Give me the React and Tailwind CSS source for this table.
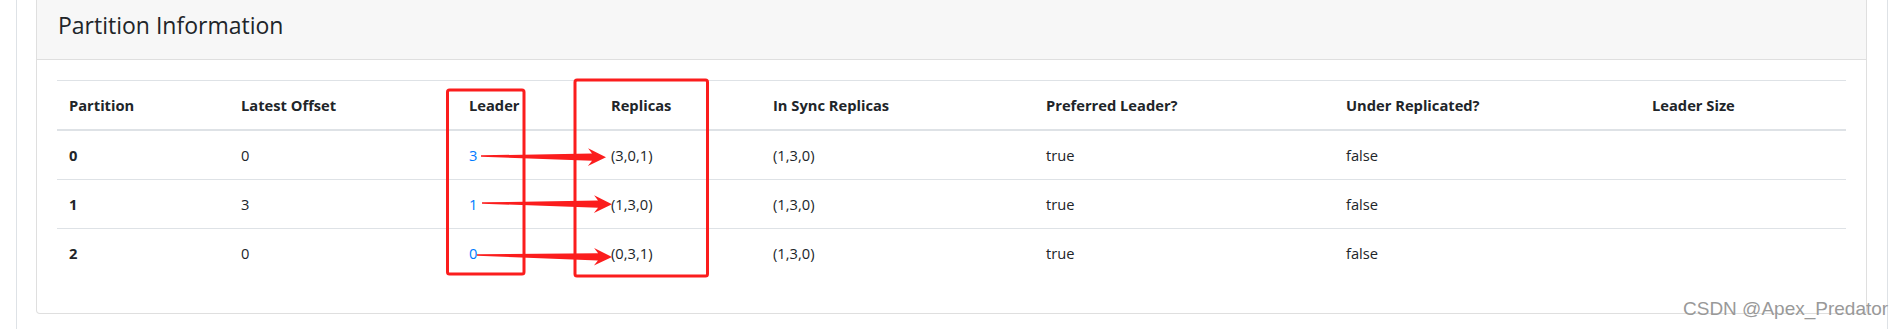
import React from 'react'

const cols = 'grid grid-cols-[172px_228px_142px_162px_273px_300px_306px_206px]'

const headers = ['Partition', 'Latest Offset', 'Leader', 'Replicas', 'In Sync Replicas', 'Preferred Leader?', 'Under Replicated?', 'Leader Size']

const rows = [
  { partition: 0, offset: 0, leader: 3, replicas: '(3,0,1)', isr: '(1,3,0)', preferred: 'true', under: 'false', size: '' },
  { partition: 1, offset: 3, leader: 1, replicas: '(1,3,0)', isr: '(1,3,0)', preferred: 'true', under: 'false', size: '' },
  { partition: 2, offset: 0, leader: 0, replicas: '(0,3,1)', isr: '(1,3,0)', preferred: 'true', under: 'false', size: '' },
]

// tapered arrow like the screenshot tool draws
function arrowPoints(x1, y1, x2, y2) {
  const dx = x2 - x1
  const dy = y2 - y1
  const len = Math.hypot(dx, dy)
  const ux = dx / len
  const uy = dy / len
  const nx = -uy
  const ny = ux
  const local = [
    [0, -0.7],
    [len - 14, -3.6],
    [len - 18, -8.8],
    [len, 0],
    [len - 18, 8.8],
    [len - 14, 3.6],
    [0, 0.7],
  ]
  return local
    .map(([a, b]) => `${(x1 + ux * a + nx * b).toFixed(1)},${(y1 + uy * a + ny * b).toFixed(1)}`)
    .join(' ')
}

function Annotations() {
  const red = '#fb1d1d'
  return (
    <svg className="absolute left-0 top-0 pointer-events-none" width="1903" height="329" viewBox="0 0 1903 329">
      <rect x="447.5" y="90" width="76.5" height="184" rx="2" fill="none" stroke={red} strokeWidth="3" />
      <rect x="575" y="80" width="132.5" height="196" rx="2" fill="none" stroke={red} strokeWidth="3" />
      <polygon points={arrowPoints(481, 156, 606, 157.3)} fill={red} />
      <polygon points={arrowPoints(482, 203, 612, 204.3)} fill={red} />
      <polygon points={arrowPoints(477, 255, 612, 257)} fill={red} />
    </svg>
  )
}

export default function App() {
  return (
    <div className="relative h-[329px] w-[1903px] overflow-hidden bg-white font-['Open_Sans',sans-serif] text-[#212529]">
      <div className="ml-[16px] h-full w-[1872px] border-l border-r border-[#dee2e6] pl-[19px] pr-[20px]">
        <div className="rounded-b-[4px] border-x border-b border-[#dfdfdf]">
          <div className="h-[60px] border-b border-[#dfdfdf] bg-[#f7f7f7] pl-[21px] pt-[11px]">
            <h4 className="text-[23px] leading-[28px] font-normal">Partition Information</h4>
          </div>
          <div className="p-5">
            <div className="mb-4 text-[14.7px] leading-6">
              <div className={`${cols} border-t border-b-2 border-[#dee2e6] font-bold`}>
                {headers.map(h => (
                  <div key={h} className="p-3">{h}</div>
                ))}
              </div>
              {rows.map((r, i) => (
                <div key={r.partition} className={`${cols} ${i > 0 ? 'border-t border-[#dee2e6]' : ''}`}>
                  <div className="p-3 font-bold">{r.partition}</div>
                  <div className="p-3">{r.offset}</div>
                  <div className="p-3 text-[#007bff]">{r.leader}</div>
                  <div className="p-3">{r.replicas}</div>
                  <div className="p-3">{r.isr}</div>
                  <div className="p-3">{r.preferred}</div>
                  <div className="p-3">{r.under}</div>
                  <div className="p-3">{r.size}</div>
                </div>
              ))}
            </div>
          </div>
        </div>
      </div>
      <Annotations />
      <div className="absolute left-[1683px] top-[299px] whitespace-nowrap font-['Liberation_Sans',Arial,sans-serif] text-[19px] leading-[19px] text-[#999999]">
        CSDN @Apex_Predator
      </div>
    </div>
  )
}
